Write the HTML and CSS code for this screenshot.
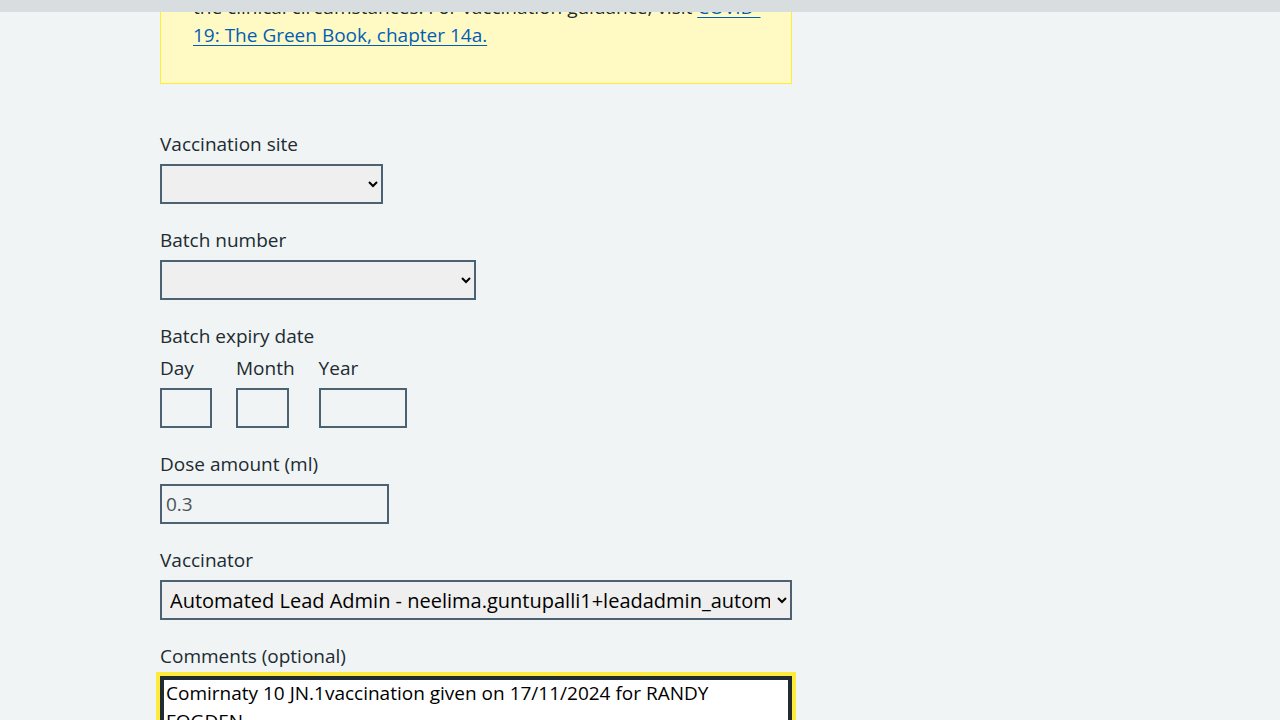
FILE: index.html
```html
<!DOCTYPE html>
<html lang="en">
<head>
<meta charset="utf-8">
<title>Record vaccination</title>
<link rel="stylesheet" href="styles.css">
</head>
<body>
<div class="topbar"></div>
<main class="container">
  <div class="column">
    <div class="inset">
      <p class="inset-text">the clinical circumstances. For vaccination guidance, visit <a class="link" href="#">COVID-19: The Green Book, chapter 14a.</a></p>
    </div>

    <form class="form">
      <div class="form-group">
        <label class="label" for="site">Vaccination site</label>
        <select class="select select-site" id="site"><option></option></select>
      </div>

      <div class="form-group">
        <label class="label" for="batch">Batch number</label>
        <select class="select select-batch" id="batch"><option></option></select>
      </div>

      <div class="form-group">
        <fieldset class="fieldset">
          <legend class="legend">Batch expiry date</legend>
          <div class="date-input">
            <div class="date-item">
              <label class="label" for="day">Day</label>
              <input class="input input-w2" id="day" type="text">
            </div>
            <div class="date-item">
              <label class="label" for="month">Month</label>
              <input class="input input-w2b" id="month" type="text">
            </div>
            <div class="date-item">
              <label class="label" for="year">Year</label>
              <input class="input input-w4" id="year" type="text">
            </div>
          </div>
        </fieldset>
      </div>

      <div class="form-group">
        <label class="label" for="dose">Dose amount (ml)</label>
        <input class="input input-dose" id="dose" type="text" value="0.3" readonly>
      </div>

      <div class="form-group">
        <label class="label" for="vaccinator">Vaccinator</label>
        <select class="select select-full" id="vaccinator">
          <option>Automated Lead Admin - neelima.guntupalli1+leadadmin_automation@nhs.net</option>
        </select>
      </div>

      <div class="form-group">
        <label class="label" for="comments">Comments (optional)</label>
        <textarea class="textarea is-focused" id="comments" rows="5">Comirnaty 10 JN.1vaccination given on 17/11/2024 for RANDY FOGDEN</textarea>
      </div>
    </form>
  </div>
</main>
</body>
</html>
```

FILE: styles.css
```css
html, body {
  margin: 0;
  padding: 0;
}

body {
  background: #f0f4f5;
  color: #212b32;
  font-family: "Open Sans", "Liberation Sans", sans-serif;
  font-size: 19px;
  line-height: 28px;
}

.topbar {
  position: fixed;
  top: 0;
  left: 0;
  right: 0;
  height: 12px;
  background: #d8dde0;
  z-index: 10;
}

.container {
  max-width: 960px;
  margin: 0 auto;
}

.column {
  width: 632px;
}

.inset {
  margin-top: -8px;
  margin-bottom: 48px;
  padding: 0 24px 34px 32px;
  background: #fff9c4;
  border: 1px solid #ffeb3b;
}

.inset-text {
  margin: 0;
}

.link {
  color: #005eb8;
  text-decoration: underline;
  text-underline-offset: 3px;
  text-decoration-thickness: 1px;
}

.form {
  margin: 0;
}

.form-group {
  margin-bottom: 24px;
}

.label,
.legend {
  display: block;
  font-size: 19px;
  line-height: 24px;
  margin-bottom: 8px;
  padding: 0;
}

.fieldset {
  margin: 0;
  padding: 0;
  border: 0;
  min-width: 0;
}

.date-input {
  display: flex;
  gap: 24px;
}

.date-item {
  display: flex;
  flex-direction: column;
  align-items: flex-start;
}

.input,
.select,
.textarea {
  box-sizing: border-box;
  font-family: "Open Sans", "Liberation Sans", sans-serif;
  border: 2px solid #4c6272;
  border-radius: 0;
  margin: 0;
}

.input {
  height: 40px;
  padding: 0 4px;
  background: transparent;
  font-size: 19px;
  color: #212b32;
}

.input-w2 { width: 52px; }
.input-w2b { width: 53px; }
.input-w4 { width: 88px; }

.input-dose {
  width: 229px;
  color: #4d5358;
}

.select {
  display: block;
  height: 40px;
  padding: 0 4px;
  background-color: #efefef;
  color: #000;
  font-size: 20px;
}

.select-site { width: 223px; }
.select-batch { width: 316px; }
.select-full { width: 632px; }

.textarea {
  display: block;
  width: 632px;
  height: 150px;
  padding: 1px 4px;
  font-size: 19px;
  line-height: 28px;
  color: #000;
  background: #fff;
  resize: vertical;
}

.textarea.is-focused {
  border-color: #212b32;
  outline: 4px solid #ffeb3b;
  outline-offset: 0;
  box-shadow: inset 0 0 0 2px #212b32;
}
```
